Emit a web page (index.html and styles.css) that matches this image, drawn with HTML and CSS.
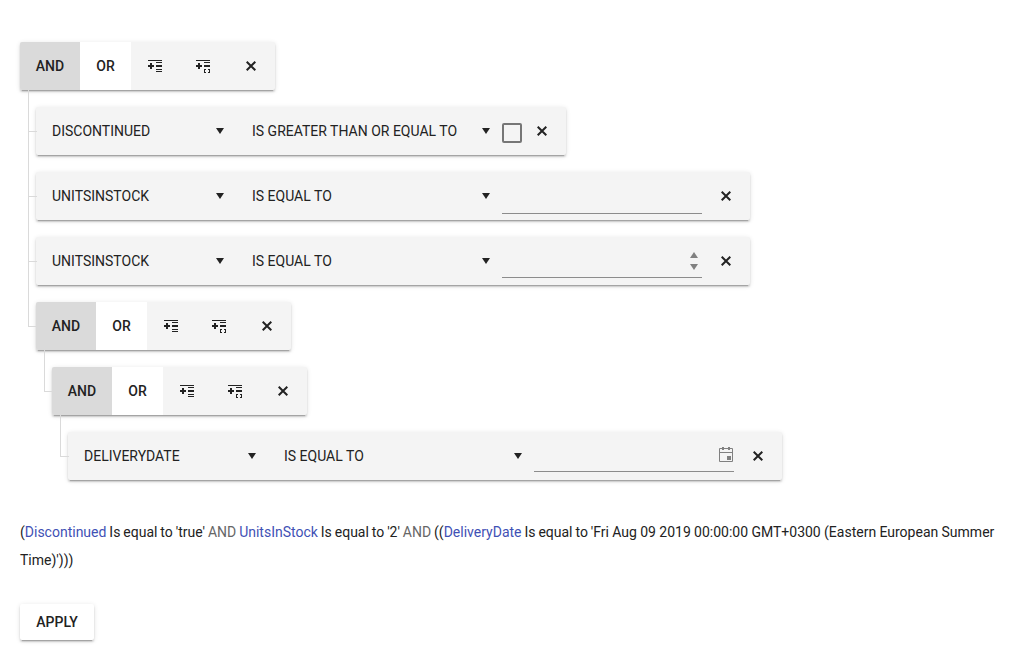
FILE: index.html
```html
<!DOCTYPE html>
<html lang="en">
<head>
<meta charset="utf-8">
<title>Filter builder</title>
<link rel="stylesheet" href="styles.css">
</head>
<body>
<svg class="defs" width="0" height="0">
  <symbol id="add-rule" viewBox="0 0 14 14"><path d="M0 0h14v1H0zM8 2h6v1H8zM8 5h6v2H8zM8 9h6v1H8zM8 11h6v1H8zM0 5h2V3h2v2h2v2H4v2H2V7H0z"/></symbol>
  <symbol id="add-group" viewBox="0 0 14 14"><path d="M0 0h14v1H0zM8 2h6v1H8zM8 5h6v2H8zM0 5h2V3h2v2h2v2H4v2H2V7H0zM8 9h2v1H9v2h1v1H8zM12 9h2v4h-2v-1h1v-2h-1z"/></symbol>
  <symbol id="close" viewBox="0 0 10 10"><path d="M.7 .7l8.600 8.600M9.300 .7L.7 9.300" fill="none" stroke="currentColor" stroke-width="2"/></symbol>
  <symbol id="down" viewBox="0 0 8 6"><path d="M0 0h8L4 6z"/></symbol>
  <symbol id="calendar" viewBox="0 0 14 15"><path d="M.5 1.500h13v13H.5zM.5 5.500h13" fill="none" stroke="currentColor"/><path d="M3 0h2v3H3zM9 0h2v3H9zM8 9h4v4H8z"/></symbol>
</svg>
<main class="builder">
  <div class="bar">
    <button class="logic selected">AND</button><button class="logic or">OR</button>
    <button class="tool"><svg class="add"><use href="#add-rule"/></svg></button>
    <button class="tool"><svg class="add"><use href="#add-group"/></svg></button>
    <button class="tool"><svg class="x"><use href="#close"/></svg></button>
  </div>
  <ul class="tree">
    <li><div class="bar">
      <div class="select field">DISCONTINUED<svg class="caret"><use href="#down"/></svg></div>
      <div class="select operator">IS GREATER THAN OR EQUAL TO<svg class="caret"><use href="#down"/></svg></div>
      <span class="checkbox"></span>
      <button class="tool"><svg class="x"><use href="#close"/></svg></button>
    </div></li>
    <li><div class="bar">
      <div class="select field">UNITSINSTOCK<svg class="caret"><use href="#down"/></svg></div>
      <div class="select operator">IS EQUAL TO<svg class="caret"><use href="#down"/></svg></div>
      <div class="value text"></div>
      <button class="tool"><svg class="x"><use href="#close"/></svg></button>
    </div></li>
    <li><div class="bar">
      <div class="select field">UNITSINSTOCK<svg class="caret"><use href="#down"/></svg></div>
      <div class="select operator">IS EQUAL TO<svg class="caret"><use href="#down"/></svg></div>
      <div class="value number"><span class="spin"><svg class="caret up"><use href="#down"/></svg><svg class="caret"><use href="#down"/></svg></span></div>
      <button class="tool"><svg class="x"><use href="#close"/></svg></button>
    </div></li>
    <li>
      <div class="bar">
        <button class="logic selected">AND</button><button class="logic or">OR</button>
        <button class="tool"><svg class="add"><use href="#add-rule"/></svg></button>
        <button class="tool"><svg class="add"><use href="#add-group"/></svg></button>
        <button class="tool"><svg class="x"><use href="#close"/></svg></button>
      </div>
      <ul class="tree"><li>
        <div class="bar">
          <button class="logic selected">AND</button><button class="logic or">OR</button>
          <button class="tool"><svg class="add"><use href="#add-rule"/></svg></button>
          <button class="tool"><svg class="add"><use href="#add-group"/></svg></button>
          <button class="tool"><svg class="x"><use href="#close"/></svg></button>
        </div>
        <ul class="tree"><li><div class="bar">
          <div class="select field">DELIVERYDATE<svg class="caret"><use href="#down"/></svg></div>
          <div class="select operator">IS EQUAL TO<svg class="caret"><use href="#down"/></svg></div>
          <div class="value date"><svg class="calendar"><use href="#calendar"/></svg></div>
          <button class="tool"><svg class="x"><use href="#close"/></svg></button>
        </div></li></ul>
      </li></ul>
    </li>
  </ul>
</main>
<p class="expression">(<span class="name">Discontinued</span> Is equal to 'true' <span class="join">AND</span> <span class="name">UnitsInStock</span> Is equal to '2' <span class="join">AND</span> ((<span class="name">DeliveryDate</span> Is equal to <span class="stamp">'Fri Aug 09 2019 00:00:00 GMT+0300 (Eastern European Summer Time)')))</span></p>
<button class="apply">APPLY</button>
</body>
</html>
```
FILE: styles.css
```css
* { box-sizing: border-box; }
body {
  margin: 0;
  padding: 42px 20px 19px;
  min-height: 659px;
  background: #fff;
  color: #222;
  font: 14px/28px Roboto, sans-serif;
}
.defs { display: none; }
svg { fill: currentColor; display: block; flex: none; }
button {
  border: 0;
  padding: 0;
  background: transparent;
  color: inherit;
  font: 500 14px/20px Roboto, sans-serif;
}
.bar {
  display: flex;
  width: max-content;
  height: 48px;
  border-radius: 2px;
  background: #f4f4f4;
  box-shadow: 0 3px 1px -2px rgba(0,0,0,.2), 0 2px 2px 0 rgba(0,0,0,.14), 0 1px 5px 0 rgba(0,0,0,.12);
}
.logic { width: 60px; height: 48px; }
.selected { background: #dadada; border-radius: 2px 0 0 2px; }
.or { width: 51px; background: #fff; }
.tool { width: 48px; height: 48px; display: flex; align-items: center; justify-content: center; }
.add { width: 14px; height: 14px; margin-top: 2px; }
.x { width: 10px; height: 10px; }
.caret { width: 8px; height: 6px; }
.tree { list-style: none; margin: 0; padding: 0 0 0 16px; }
.tree > li { position: relative; padding-top: 17px; }
.tree > li::before {
  content: "";
  position: absolute;
  left: -8px;
  top: 0;
  width: 8px;
  height: 41px;
  border: solid #dadada;
  border-width: 0 0 1px 1px;
}
.tree > li:not(:last-child)::after {
  content: "";
  position: absolute;
  left: -8px;
  top: 41px;
  bottom: 0;
  border-left: 1px solid #dadada;
}
.select { display: flex; align-items: center; justify-content: space-between; padding-left: 16px; }
.field { width: 188px; }
.operator { width: 254px; margin-left: 12px; }
.checkbox { width: 20px; height: 20px; margin: 16px -4px 0 12px; border: 2px solid #767676; border-radius: 2px; }
.value { width: 200px; height: 28px; margin: 14px 0 0 12px; border-bottom: 1px solid #8c8c8c; color: #808080; display: flex; justify-content: flex-end; }
.number { height: 27px; }
.date { height: 26px; }
.spin { display: flex; flex-direction: column; gap: 6px; padding: 1px 4px 0 0; }
.up { transform: rotate(180deg); }
.calendar { width: 14px; height: 15px; margin: 1px 1px 0 0; }
.expression { margin: 38px 0 30px; word-spacing: -.55px; }
.stamp { word-spacing: -.15px; }
.name { color: #3f51b5; }
.join { color: #666; }
.apply {
  display: block;
  width: 74px;
  height: 36px;
  border-radius: 2px;
  background: #fff;
  box-shadow: 0 3px 1px -2px rgba(0,0,0,.2), 0 2px 2px 0 rgba(0,0,0,.14), 0 1px 5px 0 rgba(0,0,0,.12);
}
```
